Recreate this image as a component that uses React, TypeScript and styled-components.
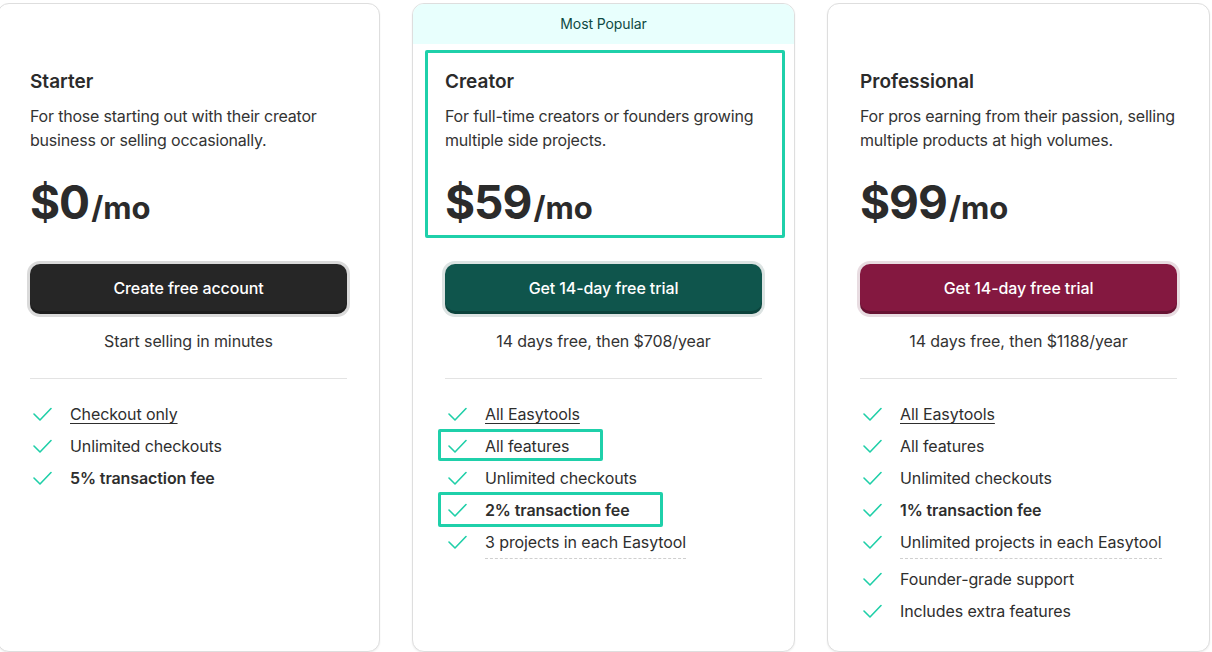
import React from "react";
import styled, { createGlobalStyle } from "styled-components";

const Global = createGlobalStyle`
  html, body { margin: 0; padding: 0; background: #ffffff; }
  body { font-family: Inter, "Noto Sans", Arial, sans-serif; color: #2e2e2e; -webkit-font-smoothing: antialiased; letter-spacing: -0.1px; }
  * { box-sizing: border-box; }
`;

const Page = styled.div`
  display: flex;
  gap: 32px;
  padding-top: 3px;
  margin-left: -3px;
  align-items: stretch;
`;

const Card = styled.div`
  width: 383px;
  flex: 0 0 383px;
  border: 1px solid #dedede;
  border-radius: 12px;
  box-shadow: 0 1px 2px rgba(0, 0, 0, 0.07);
  background: #fff;
  overflow: hidden;
  display: flex;
  flex-direction: column;
  padding-bottom: 28px;
`;

const Banner = styled.div<{ $show: boolean }>`
  height: 40px;
  display: flex;
  align-items: center;
  justify-content: center;
  background: ${(p) => (p.$show ? "#e8fffd" : "transparent")};
  color: #0e4a43;
  font-size: 14px;
  font-weight: 400;
  padding-bottom: 2px;
`;

const Body = styled.div`
  padding: 0 32px;
  display: flex;
  flex-direction: column;
`;

const Intro = styled.div`
  position: relative;
  padding-top: 26px;
`;

const Highlight = styled.div`
  position: absolute;
  top: 6px;
  left: -20px;
  right: -23px;
  bottom: -2px;
  border: 3px solid #1fd0aa;
  border-radius: 2px;
  pointer-events: none;
`;

const Title = styled.h2`
  margin: 0;
  font-size: 19px;
  line-height: 24px;
  font-weight: 600;
  color: #2b2b2b;
  letter-spacing: 0;
`;

const Desc = styled.p`
  margin: 10px 0 0;
  font-size: 16px;
  line-height: 24px;
  color: #333;
  letter-spacing: -0.2px;
`;

const Price = styled.div`
  margin-top: 22px;
  display: flex;
  align-items: baseline;
  line-height: 56px;
  color: #2b2b2b;
  font-weight: 700;
`;

const Amount = styled.span`
  font-size: 46px;
  letter-spacing: -1px;
`;

const Per = styled.span`
  font-size: 31px;
  margin-left: 2px;
  letter-spacing: 0;
`;

const Button = styled.button<{ $bg: string; $ring: string }>`
  margin-top: 28px;
  height: 50px;
  width: 100%;
  border: none;
  border-radius: 10px;
  background: ${(p) => p.$bg};
  box-shadow: 0 0 0 3px ${(p) => p.$ring}, inset 0 -3px 0 rgba(0, 0, 0, 0.22);
  color: #fff;
  font-family: inherit;
  font-size: 16px;
  font-weight: 500;
  letter-spacing: -0.1px;
  cursor: pointer;
  padding: 0 0 2px;
`;

const Note = styled.div`
  margin-top: 15px;
  text-align: center;
  font-size: 16px;
  line-height: 24px;
  color: #333;
`;

const Divider = styled.hr`
  margin: 25px 0 0;
  border: none;
  border-top: 1px solid #e3e3e3;
`;

const Features = styled.ul`
  list-style: none;
  margin: 23px 0 0;
  padding: 0;
  display: flex;
  flex-direction: column;
  gap: 8px;
`;

const Item = styled.li<{ $bold?: boolean }>`
  position: relative;
  display: flex;
  align-items: flex-start;
  gap: 16px;
  font-size: 16px;
  line-height: 24px;
  color: #2e2e2e;
  font-weight: ${(p) => (p.$bold ? 600 : 400)};
`;

const ItemText = styled.span<{ $dashed?: boolean; $link?: boolean }>`
  padding-bottom: ${(p) => (p.$dashed ? "4px" : "0")};
  border-bottom: ${(p) => (p.$dashed ? "1px dashed #cfcfcf" : "none")};
  text-decoration: ${(p) => (p.$link ? "underline" : "none")};
  text-underline-offset: 3px;
  text-decoration-thickness: 1px;
`;

const IconBox = styled.span`
  flex: 0 0 24px;
  height: 24px;
  display: flex;
  align-items: center;
  justify-content: center;
`;

const Mark = styled.div<{ $w: number; $top: number; $h: number }>`
  position: absolute;
  left: -7px;
  top: ${(p) => p.$top}px;
  width: ${(p) => p.$w}px;
  height: ${(p) => p.$h}px;
  border: 3px solid #1fd0aa;
  border-radius: 2px;
  pointer-events: none;
`;

const Check = () => (
  <svg width="19" height="14" viewBox="0 0 19 14" fill="none">
    <path d="M1 7 L7 13 L18 1.5" stroke="#1fcfa8" strokeWidth="1.6" strokeLinecap="round" strokeLinejoin="round" />
  </svg>
);

type Feature = {
  text: string;
  bold?: boolean;
  link?: boolean;
  dashed?: boolean;
  mark?: { w: number; top: number; h: number };
};

type Plan = {
  name: string;
  desc: string;
  price: string;
  popular?: boolean;
  button: string;
  bg: string;
  ring: string;
  note: string;
  features: Feature[];
};

const plans: Plan[] = [
  {
    name: "Starter",
    desc: "For those starting out with their creator business or selling occasionally.",
    price: "$0",
    button: "Create free account",
    bg: "#262626",
    ring: "#dadada",
    note: "Start selling in minutes",
    features: [
      { text: "Checkout only", link: true },
      { text: "Unlimited checkouts" },
      { text: "5% transaction fee", bold: true },
    ],
  },
  {
    name: "Creator",
    desc: "For full-time creators or founders growing multiple side projects.",
    price: "$59",
    popular: true,
    button: "Get 14-day free trial",
    bg: "#0f554c",
    ring: "#dce3e2",
    note: "14 days free, then $708/year",
    features: [
      { text: "All Easytools", link: true },
      { text: "All features", mark: { w: 165, top: -5, h: 32 } },
      { text: "Unlimited checkouts" },
      { text: "2% transaction fee", bold: true, mark: { w: 225, top: -6, h: 35 } },
      { text: "3 projects in each Easytool", dashed: true },
    ],
  },
  {
    name: "Professional",
    desc: "For pros earning from their passion, selling multiple products at high volumes.",
    price: "$99",
    button: "Get 14-day free trial",
    bg: "#841840",
    ring: "#e8dce1",
    note: "14 days free, then $1188/year",
    features: [
      { text: "All Easytools", link: true },
      { text: "All features" },
      { text: "Unlimited checkouts" },
      { text: "1% transaction fee", bold: true },
      { text: "Unlimited projects in each Easytool", dashed: true },
      { text: "Founder-grade support" },
      { text: "Includes extra features" },
    ],
  },
];

export default function App() {
  return (
    <>
      <Global />
      <Page>
        {plans.map((p) => (
          <Card key={p.name}>
            <Banner $show={!!p.popular}>{p.popular ? "Most Popular" : null}</Banner>
            <Body>
              <Intro>
                {p.popular && <Highlight />}
                <Title>{p.name}</Title>
                <Desc>{p.desc}</Desc>
                <Price>
                  <Amount>{p.price}</Amount>
                  <Per>/mo</Per>
                </Price>
              </Intro>
              <Button $bg={p.bg} $ring={p.ring}>{p.button}</Button>
              <Note>{p.note}</Note>
              <Divider />
              <Features>
                {p.features.map((f) => (
                  <Item key={f.text} $bold={f.bold}>
                    <IconBox>
                      <Check />
                    </IconBox>
                    <ItemText $dashed={f.dashed} $link={f.link}>{f.text}</ItemText>
                    {f.mark && <Mark $w={f.mark.w} $top={f.mark.top} $h={f.mark.h} />}
                  </Item>
                ))}
              </Features>
            </Body>
          </Card>
        ))}
      </Page>
    </>
  );
}
